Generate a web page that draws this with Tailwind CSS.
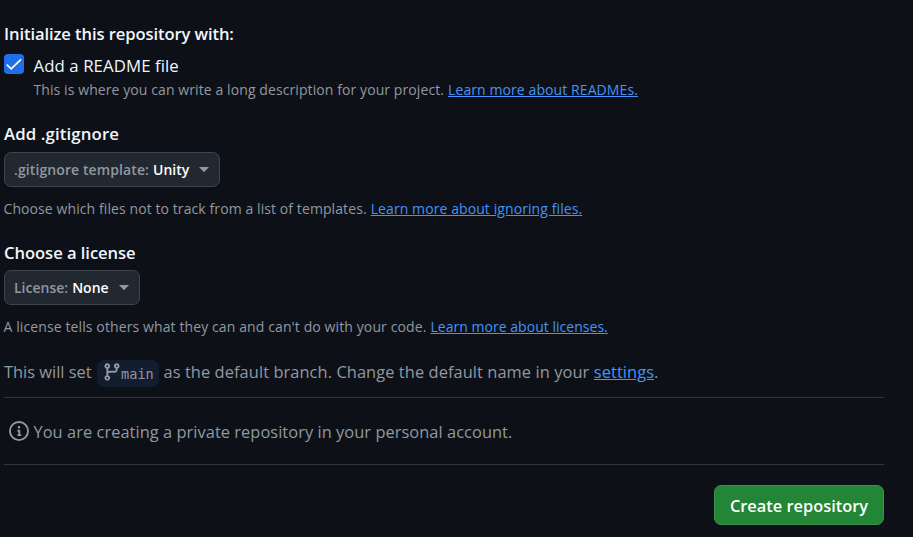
<!DOCTYPE html>
<html lang="en">
<head>
<meta charset="utf-8">
<title>Create a new repository</title>
<script src="https://cdn.jsdelivr.net/npm/@tailwindcss/browser@4"></script>
</head>
<body class="bg-[#0d1117] font-['Segoe_UI','Open_Sans',sans-serif] text-[#9198a1]">
<main class="flex h-[537px] w-[884px] flex-col overflow-hidden pt-[22px] pl-1 whitespace-nowrap">
  <h2 class="h-6 text-[16.6px] leading-6 font-semibold tracking-[-0.1px] text-[#f0f6fc]">Initialize this repository with:</h2>
  <div class="mt-2 flex gap-[9.5px]">
    <span class="flex size-5 items-center justify-center rounded-[4px] bg-[#1f6feb]">
      <svg class="size-5" viewBox="0 0 20 20" fill="none" stroke="#fff" stroke-width="1.7"><path d="M2.8 10.6 7.2 14.8 17 5.4"/></svg>
    </span>
    <div>
      <p class="h-[26px] text-[16.8px] leading-6 tracking-[0.08px] text-[#f0f6fc]"><span>Add a README file</span></p>
      <p class="flex h-5 gap-1 text-[14px] leading-5 tracking-[0.09px]"><span>This is where you can write a long description for your project.</span><a href="#" class="text-[#4493f8] underline">Learn more about READMEs.</a></p>
    </div>
  </div>
  <h2 class="mt-[22px] h-6 text-[16.8px] leading-6 font-semibold tracking-[0.12px] text-[#f0f6fc]">Add .gitignore</h2>
  <button class="mt-[6px] flex h-[35px] w-[216px] items-center rounded-[7px] border border-[#3d444d] bg-[#212830] pl-[9px] text-[14px] font-semibold">
    <span class="tracking-[0.1px]">.gitignore template:</span><span class="ml-1 text-white">Unity</span>
    <svg class="ml-[10px] h-[6px] w-[10px]" viewBox="0 0 10 6"><path d="M0 0h10L5 5.3z" fill="#9198a1"/></svg>
  </button>
  <p class="mt-3 -ml-[0.5px] flex h-5 gap-1 text-[14px] leading-5 tracking-[0.09px]"><span>Choose which files not to track from a list of templates.</span><a href="#" class="text-[#4493f8] underline">Learn more about ignoring files.</a></p>
  <h2 class="mt-[22px] h-6 text-[16.6px] leading-6 font-semibold tracking-[-0.05px] text-[#f0f6fc]">Choose a license</h2>
  <button class="mt-[5px] flex h-[35px] w-[136px] items-center rounded-[7px] border border-[#3d444d] bg-[#212830] pl-[9px] text-[14px] font-semibold">
    <span>License:</span><span class="ml-1 text-white">None</span>
    <svg class="ml-[10px] h-[6px] w-[10px]" viewBox="0 0 10 6"><path d="M0 0h10L5 5.3z" fill="#9198a1"/></svg>
  </button>
  <p class="mt-3 -ml-[0.5px] flex h-5 gap-1 text-[14px] leading-5 tracking-[0.11px]"><span>A license tells others what they can and can't do with your code.</span><a href="#" class="tracking-[0.03px] text-[#4493f8] underline">Learn more about licenses.</a></p>
  <p class="mt-[23px] flex h-[37px] text-[16.4px] leading-6">
    <span>This will set</span>
    <span class="ml-[5px] flex h-[27px] w-[62px] items-center rounded-[7px] bg-[#121d2f] pl-[5px]">
      <svg class="-mt-1 size-5 shrink-0" viewBox="0 0 16 16" fill="#9198a1"><path d="M9.5 3.25a2.25 2.25 0 1 1 3 2.122V6A2.5 2.5 0 0 1 10 8.5H6a1 1 0 0 0-1 1v1.128a2.251 2.251 0 1 1-1.5 0V5.372a2.25 2.25 0 1 1 1.5 0v1.836A2.493 2.493 0 0 1 6 7h4a1 1 0 0 0 1-1v-.628A2.25 2.25 0 0 1 9.5 3.25Zm-6 0a.75.75 0 1 0 1.5 0 .75.75 0 0 0-1.5 0Zm8.25-.75a.75.75 0 1 0 0 1.5.75.75 0 0 0 0-1.5ZM4.25 12a.75.75 0 1 0 0 1.5.75.75 0 0 0 0-1.5Z"/></svg>
      <span class="-ml-[0.5px] font-['DejaVu_Sans_Mono',monospace] text-[13.6px]">main</span>
    </span>
    <span class="ml-[5px] tracking-[0.08px]">as the default branch. Change the default name in your</span>
    <a href="#" class="ml-[4.5px] tracking-[0.08px] text-[#4493f8] underline">settings</a><span>.</span>
  </p>
  <div class="flex h-[68px] items-center border-y border-[#30363d] pl-[5px] text-[16.4px] tracking-[0.05px]">
    <svg class="size-5" viewBox="0 0 16 16" fill="#9198a1"><path d="M0 8a8 8 0 1 1 16 0A8 8 0 0 1 0 8Zm8-6.5a6.5 6.5 0 1 0 0 13 6.5 6.5 0 0 0 0-13ZM6.5 7.75A.75.75 0 0 1 7.25 7h1a.75.75 0 0 1 .75.75v2.75h.25a.75.75 0 0 1 0 1.5h-2a.75.75 0 0 1 0-1.5h.25v-2h-.25a.75.75 0 0 1-.75-.75ZM8 6a1 1 0 1 1 0-2 1 1 0 0 1 0 2Z"/></svg>
    <span class="mt-[2px] ml-[4.5px]">You are creating a private repository in your personal account.</span>
  </div>
  <button class="mt-5 flex h-10 w-[170px] items-center justify-center self-end rounded-[7px] border border-[#39914a] bg-[#238636] pt-[2px] text-[16.4px] font-semibold text-white">Create repository</button>
</main>
</body>
</html>
